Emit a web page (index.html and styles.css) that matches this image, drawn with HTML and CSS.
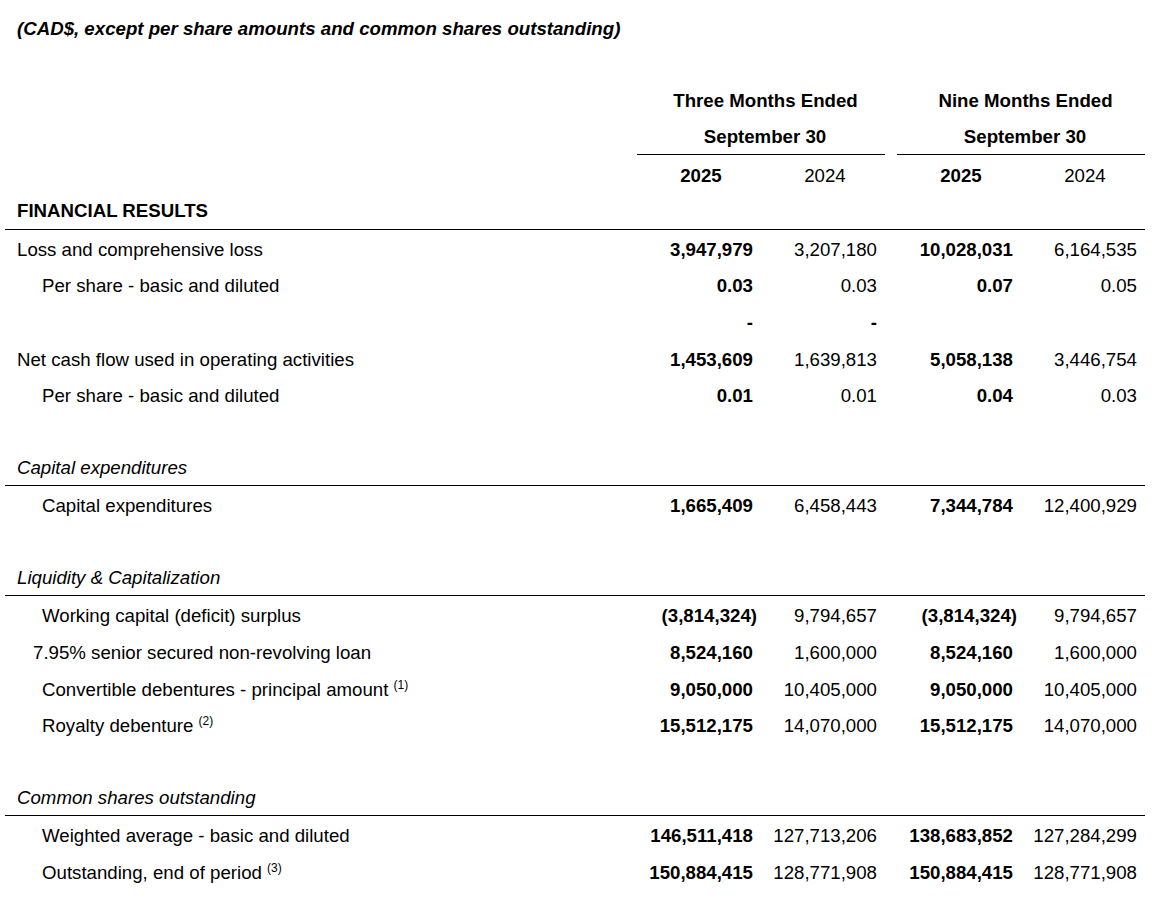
FILE: index.html
```html
<!DOCTYPE html>
<html lang="en">
<head>
<meta charset="utf-8">
<title>Financial Results</title>
<link rel="stylesheet" href="styles.css">
</head>
<body>
<div class="page">
  <div class="title">(CAD$, except per share amounts and common shares outstanding)</div>
  <div class="spacer"></div>

  <div class="row hdr h0">
    <div class="label"></div>
    <div class="span2 colhead">Three Months Ended</div>
    <div class="gap"></div>
    <div class="span2 colhead">Nine Months Ended</div>
  </div>
  <div class="row hdr h1">
    <div class="label"></div>
    <div class="span2 colhead ruled">September 30</div>
    <div class="gap"></div>
    <div class="span2 colhead ruled">September 30</div>
  </div>
  <div class="row hdr h2">
    <div class="label"></div>
    <div class="year b">2025</div>
    <div class="year">2024</div>
    <div class="gap"></div>
    <div class="year b">2025</div>
    <div class="year">2024</div>
  </div>

  <div class="row section">
    <div class="label l0 b">FINANCIAL RESULTS</div>
  </div>
  <div class="row">
    <div class="label l0">Loss and comprehensive loss</div>
    <div class="num b">3,947,979</div>
    <div class="num">3,207,180</div>
    <div class="gap"></div>
    <div class="num b">10,028,031</div>
    <div class="num">6,164,535</div>
  </div>
  <div class="row">
    <div class="label l1">Per share - basic and diluted</div>
    <div class="num b">0.03</div>
    <div class="num">0.03</div>
    <div class="gap"></div>
    <div class="num b">0.07</div>
    <div class="num">0.05</div>
  </div>
  <div class="row">
    <div class="label"></div>
    <div class="num b">-</div>
    <div class="num b">-</div>
    <div class="gap"></div>
    <div class="num"></div>
    <div class="num"></div>
  </div>
  <div class="row">
    <div class="label l0">Net cash flow used in operating activities</div>
    <div class="num b">1,453,609</div>
    <div class="num">1,639,813</div>
    <div class="gap"></div>
    <div class="num b">5,058,138</div>
    <div class="num">3,446,754</div>
  </div>
  <div class="row">
    <div class="label l1">Per share - basic and diluted</div>
    <div class="num b">0.01</div>
    <div class="num">0.01</div>
    <div class="gap"></div>
    <div class="num b">0.04</div>
    <div class="num">0.03</div>
  </div>
  <div class="row"></div>

  <div class="row section">
    <div class="label l0 i">Capital expenditures</div>
  </div>
  <div class="row">
    <div class="label l1">Capital expenditures</div>
    <div class="num b">1,665,409</div>
    <div class="num">6,458,443</div>
    <div class="gap"></div>
    <div class="num b">7,344,784</div>
    <div class="num">12,400,929</div>
  </div>
  <div class="row"></div>

  <div class="row section">
    <div class="label l0 i">Liquidity &amp; Capitalization</div>
  </div>
  <div class="row">
    <div class="label l1">Working capital (deficit) surplus</div>
    <div class="num b neg">(3,814,324)</div>
    <div class="num">9,794,657</div>
    <div class="gap"></div>
    <div class="num b neg">(3,814,324)</div>
    <div class="num">9,794,657</div>
  </div>
  <div class="row">
    <div class="label l2">7.95% senior secured non-revolving loan</div>
    <div class="num b">8,524,160</div>
    <div class="num">1,600,000</div>
    <div class="gap"></div>
    <div class="num b">8,524,160</div>
    <div class="num">1,600,000</div>
  </div>
  <div class="row">
    <div class="label l1">Convertible debentures - principal amount <sup>(1)</sup></div>
    <div class="num b">9,050,000</div>
    <div class="num">10,405,000</div>
    <div class="gap"></div>
    <div class="num b">9,050,000</div>
    <div class="num">10,405,000</div>
  </div>
  <div class="row">
    <div class="label l1">Royalty debenture <sup>(2)</sup></div>
    <div class="num b">15,512,175</div>
    <div class="num">14,070,000</div>
    <div class="gap"></div>
    <div class="num b">15,512,175</div>
    <div class="num">14,070,000</div>
  </div>
  <div class="row"></div>

  <div class="row section">
    <div class="label l0 i">Common shares outstanding</div>
  </div>
  <div class="row">
    <div class="label l1">Weighted average - basic and diluted</div>
    <div class="num b">146,511,418</div>
    <div class="num">127,713,206</div>
    <div class="gap"></div>
    <div class="num b">138,683,852</div>
    <div class="num">127,284,299</div>
  </div>
  <div class="row">
    <div class="label l1">Outstanding, end of period <sup>(3)</sup></div>
    <div class="num b">150,884,415</div>
    <div class="num">128,771,908</div>
    <div class="gap"></div>
    <div class="num b">150,884,415</div>
    <div class="num">128,771,908</div>
  </div>
</div>
</body>
</html>
```

FILE: styles.css
```css
html, body {
  margin: 0;
  padding: 0;
  background: #ffffff;
}

body {
  font-family: "Liberation Sans", Arial, sans-serif;
  font-size: 18.67px;
  color: #000000;
}

.page {
  width: 1140px;
  margin-left: 5px;
  padding-top: 11px;
}

.title {
  height: 36.67px;
  line-height: 36.67px;
  padding-left: 12px;
  font-weight: bold;
  font-style: italic;
}

.spacer {
  height: 34px;
}

.row {
  display: grid;
  grid-template-columns: 632px 124px 124px 12px 124px 124px;
  height: 36.67px;
  padding-top: 3px;
  line-height: 33.67px;
  box-sizing: border-box;
}

.row.hdr {
  padding-top: 0;
  line-height: 36.67px;
}

.row.h0 {
  padding-top: 1px;
  line-height: 35.67px;
}

.row.h1 {
  padding-top: 0;
  line-height: 36.67px;
}

.row.h2 {
  height: 38.17px;
  padding-top: 3px;
  line-height: 35.17px;
}

.row.section {
  border-bottom: 1px solid #000000;
  padding-top: 1px;
  line-height: 34.67px;
}

.label {
  white-space: nowrap;
}

.l0 { padding-left: 12px; }
.l1 { padding-left: 37px; }
.l2 { padding-left: 28px; }

.b { font-weight: bold; }
.i { font-style: italic; }

.span2 {
  grid-column: span 2;
  text-align: center;
  padding-left: 9px;
}

.colhead {
  font-weight: bold;
  box-sizing: border-box;
}

.colhead.ruled {
  border-bottom: 1px solid #000000;
  padding-top: 3px;
  line-height: 32.67px;
  padding-left: 8px;
}

.year {
  text-align: center;
  padding-left: 4px;
}

.num {
  text-align: right;
  padding-right: 8px;
  white-space: nowrap;
}

.num.neg {
  padding-right: 4px;
}

sup {
  font-size: 12px;
  line-height: 0;
  vertical-align: 7px;
}
```
